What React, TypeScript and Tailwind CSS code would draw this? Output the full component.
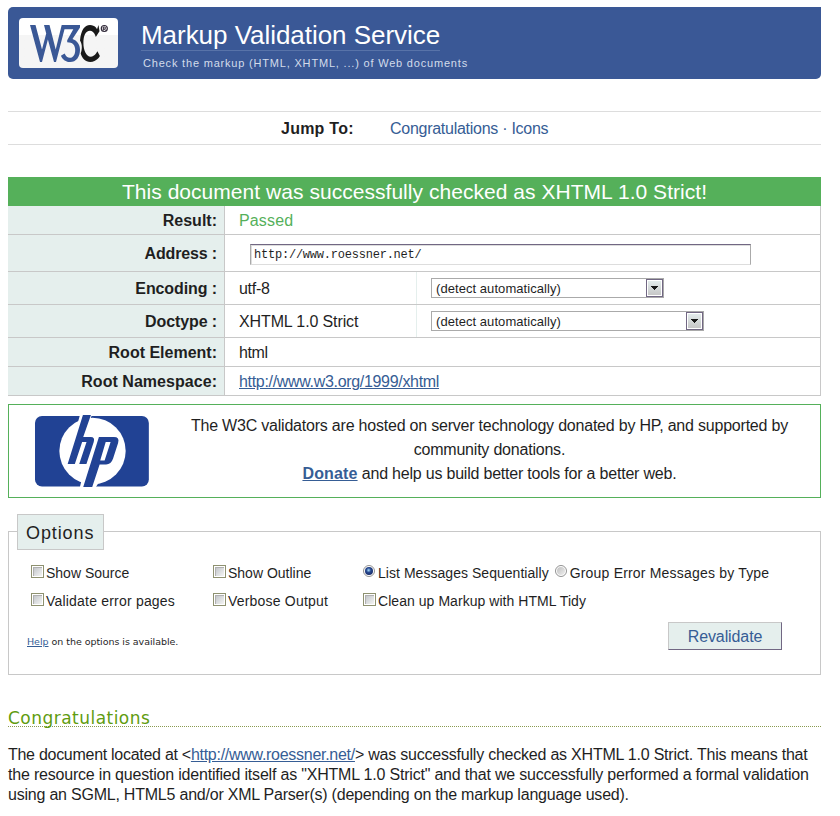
import type { ReactNode } from "react";

function W3CLogo() {
  return (
    <svg width="99" height="50" viewBox="19 18 99 50" aria-label="W3C">
      <path d="M30 25h5.500L42 49.500 46.200 33.500 44 25h5.500L55.700 49.500 61.700 25H80v2.500L72.500 39C77 40.500 80 44.500 80 49.700 80 57 76 62 70.200 62c-4.200 0-7.500-2.300-9.300-6.300l3.700-2.200c1.200 2.700 3 4.300 5.300 4.300 3.300 0 5.300-3.200 5.300-7.800 0-5-2.700-7.700-8-7.700v-2.100L73.300 29.300H64.500L56 62h-2L47.900 39.500 42 62h-2z" fill="#3a5896" />
      <path d="M98.500 25l1 6.300-3.700 5.700s-1.600-6.200-5.800-6.200c-4.600 0-6.600 5.200-6.600 12.200 0 7.400 2.900 13.700 7.300 13.700 4.200 0 6.700-5.400 6.700-5.400l2.500 4.700S96.800 62 90.300 62C85.300 62 82 58 80.700 53.500c3-8-.7-13-.7-13C81 30 84.500 25 90 25c5.200 0 7 4.200 7 4.200z" fill="#1a1a1a" />
      <circle cx="104.300" cy="28.500" r="3" fill="none" stroke="#302838" strokeWidth="1.200" />
      <path d="M103.300 30.500v-3.500h1.200a1 1 0 0 1 0 2h-1.200m1.200 0l1.100 1.500" fill="none" stroke="#302838" strokeWidth="1" />
    </svg>
  );
}

function HPLogo() {
  return (
    <svg width="116" height="73" viewBox="34 415 116 73" aria-label="hp" className="block">
      <rect x="35" y="416" width="114" height="70.500" rx="7" fill="#214294" />
      <circle cx="92.600" cy="451" r="33.200" fill="#fff" />
      <path d="M80 415h12l-5 13-12 5zM107 470l-11 17H80l4-17z" fill="#fff" />
      <path d="M83 415h8L83.300 437h7.500q4.500 0 3 5L86.500 464h-7.200l7.300-22h-4.400l-7.300 22h-7.200z" fill="#214294" />
      <path d="M99 437h15q6 0 4.200 6l-5 15.500q-2 6-7 6h-6.500L92.300 487h-9zM105.800 442l-5.500 18.500h4.400l6-18.500z" fill="#214294" fillRule="evenodd" />
    </svg>
  );
}

function Check({ children }: { children: ReactNode }) {
  return (
    <label className="flex h-7 items-center whitespace-nowrap">
      <span className="mr-0.5 mb-[3px] flex h-[13px] w-[13px] shrink-0 items-center justify-center border border-[#8e9170] bg-white">
        <span className="h-[9px] w-[9px] border-t border-l border-[#b0b0b0] bg-linear-to-br from-[#c4c7cb] to-[#f4f5f4]" />
      </span>
      {children}
    </label>
  );
}

function Radio({ checked = false, children }: { checked?: boolean; children: ReactNode }) {
  return (
    <label className="flex h-7 items-center whitespace-nowrap">
      <span className="mr-[3px] mb-[4px] flex h-3 w-3 shrink-0 items-center justify-center rounded-full border border-[#929292] bg-white">
        {checked ? (
          <span className="h-2 w-2 rounded-full bg-[radial-gradient(circle_at_45%_40%,#a7dfff_0%,#26488f_35%,#101a50_100%)]" />
        ) : (
          <span className="h-2 w-2 rounded-full bg-linear-to-br from-[#c0c0c0] to-[#eeeeee]" />
        )}
      </span>
      {children}
    </label>
  );
}

function Row({ label, height, tracking = "", children }: { label: string; height: string; tracking?: string; children: ReactNode }) {
  return (
    <div className={"flex border-b border-[#c8c8c8] " + height}>
      <div className={"flex w-[217px] shrink-0 items-center justify-end border-r border-[#c8c8c8] bg-[#e5efed] pt-0.5 pr-[7px] font-bold " + tracking}>
        {label}
      </div>
      {children}
    </div>
  );
}

function Select({ width }: { width: string }) {
  return (
    <div className={"flex h-5 justify-between border border-[#aaa] bg-white pl-1 text-[13px] leading-[19px] tracking-[0.06px] " + width}>
      <span>(detect automatically)</span>
      <span className="flex h-[18px] w-[17px] items-center justify-center border border-[#716783] bg-linear-to-b from-[#e5eeee] to-[#c4c4c4] shadow-[inset_0_0_0_1px_white]">
        <svg width="7" height="4" viewBox="0 0 7 4" shapeRendering="crispEdges">
          <path d="M0 0h7v1H6v1H5v1H4v1H3V3H2V2H1V1H0z" fill="#171717" />
        </svg>
      </span>
    </div>
  );
}

export default function App() {
  return (
    <div className="h-[816px] w-[840px] overflow-hidden bg-white pt-[7px] pl-2 font-['Liberation_Sans',Arial,sans-serif] text-base leading-5 text-[#1f1f1f]">
      <div className="w-[813px]">
        <header className="flex h-[72px] rounded-l-[5px] rounded-br-[5px] bg-[#3a5896] pt-[11px] pl-[11px]">
          <div className="h-[50px] w-[99px] rounded bg-linear-to-b from-white from-35% to-[#f5f5f5] to-35%">
            <W3CLogo />
          </div>
          <div className="ml-[23px] whitespace-nowrap">
            <h1 className="h-[33px] w-[299px] border-b border-[#5873a9] text-[26px] leading-[35px] tracking-[-0.04px] text-white">Markup Validation Service</h1>
            <p className="pl-0.5 text-[11px] leading-6 tracking-[0.81px] text-[#d3dceb]">Check the markup (HTML, XHTML, ...) of Web documents</p>
          </div>
        </header>

        <nav className="mt-8 flex h-[34px] items-center border-y border-[#ddd] pt-px pl-[273px] whitespace-nowrap">
          <b className="w-[109px] tracking-[0.24px]">Jump To:</b>
          <span className="tracking-[-0.27px] text-[#365d95]">Congratulations · Icons</span>
        </nav>

        <section className="mt-8">
          <h2 className="h-[29px] bg-[#55b05a] text-center text-[21px] leading-[30px] tracking-[0.04px] text-white">This document was successfully checked as XHTML 1.0 Strict!</h2>
          <div className="border-r border-[#c8c8c8]">
            <Row label="Result:" height="h-[29px]"><div className="flex items-center pt-0.5 pl-[14px] tracking-[0.15px] text-[#55b05a]">Passed</div></Row>
            <Row label="Address :" height="h-[37px]" tracking="tracking-[-0.15px]">
              <div className="mt-[9px] ml-[25px] h-[21px] w-[501px] border border-t-[#716783] border-r-[#aaa] border-b-[#ddd] border-l-[#aaa] pl-[3px] font-['Liberation_Mono',monospace] text-[12px] leading-[21px] tracking-[-0.22px] shadow-[inset_1px_1px_0_#ddd]">http://www.roessner.net/</div>
            </Row>
            <Row label="Encoding :" height="h-[33px]" tracking="tracking-[-0.1px]">
              <div className="flex w-[192px] items-center border-r border-[#e5efed] pt-0.5 pl-[14px] tracking-[-0.3px]">utf-8</div>
              <div className="flex items-center pl-[14px]"><Select width="w-[233px]" /></div>
            </Row>
            <Row label="Doctype :" height="h-[33px]" tracking="tracking-[-0.1px]">
              <div className="flex w-[192px] items-center border-r border-[#e5efed] pt-0.5 pl-[14px] tracking-[-0.12px]">XHTML 1.0 Strict</div>
              <div className="flex items-center pl-[14px]"><Select width="w-[273px]" /></div>
            </Row>
            <Row label="Root Element:" height="h-[29px]"><div className="flex items-center pt-0.5 pl-[14px] tracking-[-0.4px]">html</div></Row>
            <Row label="Root Namespace:" height="h-[29px]" tracking="tracking-[0.04px]"><div className="flex items-center pt-0.5 pl-[14px] tracking-[-0.32px] text-[#365d95] underline">http://www.w3.org/1999/xhtml</div></Row>
          </div>
        </section>

        <section className="mt-2 flex h-[94px] border border-[#55b05a] pt-[10px] pl-[25px]">
          <HPLogo />
          <p className="-mt-px ml-[9px] w-[662px] text-center leading-6 tracking-[-0.21px] whitespace-nowrap">
            The W3C validators are hosted on server technology donated by HP, and supported by<br />
            community donations.<br />
            <b className="tracking-[0.15px] text-[#365d95] underline">Donate</b> and help us build better tools for a better web.
          </p>
        </section>

        <section className="mt-4">
          <div className="relative z-10 -mb-[19px] ml-[9px] h-9 w-[87px] border border-[#c8c8c8] bg-[#e5efed] pl-2 text-[18px] leading-[36px] tracking-[0.9px]">Options</div>
          <div className="h-[144px] border border-[#c8c8c8] pt-[27px] pl-[22px] text-[14px]">
            <div className="grid grid-cols-[182px_150px_1fr]">
              <Check>Show Source</Check>
              <Check>Show Outline</Check>
              <div className="flex gap-[6px]">
                <Radio checked><span className="tracking-[0.04px]">List Messages Sequentially</span></Radio>
                <Radio><span className="tracking-[0.19px]">Group Error Messages by Type</span></Radio>
              </div>
              <Check><span className="tracking-[0.2px]">Validate error pages</span></Check>
              <Check><span className="tracking-[0.2px]">Verbose Output</span></Check>
              <Check><span className="tracking-[0.05px]">Clean up Markup with HTML Tidy</span></Check>
            </div>
            <div className="flex justify-between pt-[7px] pr-[38px]">
              <p className="-ml-1 pt-[10px] font-['DejaVu_Sans',sans-serif] text-[9.500px] tracking-[-0.04px]"><span className="text-[#365d95] underline">Help</span> on the options is available.</p>
              <button className="h-7 w-[114px] border border-t-[#c8c8c8] border-r-[#716783] border-b-[#716783] border-l-[#c8c8c8] bg-[#e5efed] pt-0.5 text-base leading-[24px] tracking-[-0.1px] text-[#365d95]">Revalidate</button>
            </div>
          </div>
        </section>

        <section>
          <h2 className="mt-8 h-5 border-b border-dotted border-[#8a9a50] font-['DejaVu_Sans',sans-serif] text-[17px] leading-[23px] tracking-[0.47px] text-[#5f9c10]">Congratulations</h2>
          <p className="mt-[18px] tracking-[-0.22px] whitespace-nowrap">
            <span className="tracking-[-0.28px]">The document located at &lt;<span className="text-[#365d95] underline">http://www.roessner.net/</span></span>&gt; was successfully checked as XHTML 1.0 Strict. This means that<br />
            <span className="tracking-[-0.2px]">the resource in question identified itself as "XHTML 1.0 Strict" and that we successfully performed a formal validation</span><br />
            using an SGML, HTML5 and/or XML Parser(s) (depending on the markup language used).
          </p>
        </section>
      </div>
    </div>
  );
}
